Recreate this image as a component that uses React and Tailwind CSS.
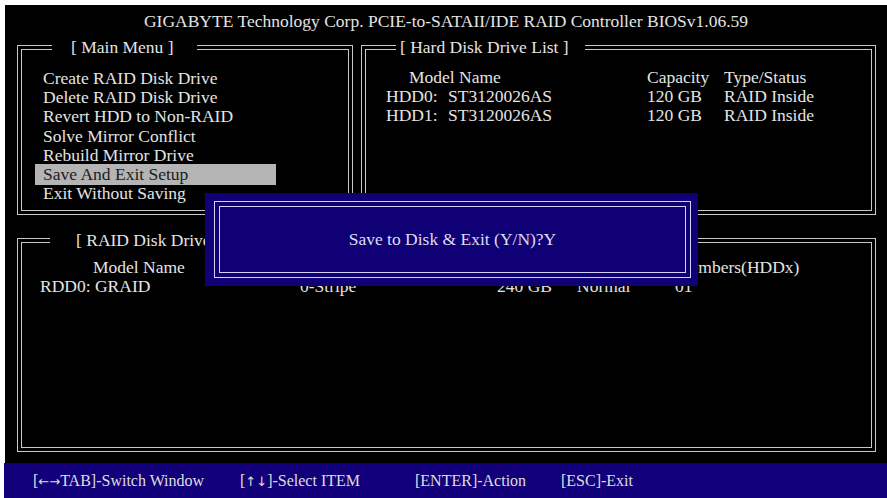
import React from 'react';

const menuItems = [
    'Create RAID Disk Drive',
    'Delete RAID Disk Drive',
    'Revert HDD to Non-RAID',
    'Solve Mirror Conflict',
    'Rebuild Mirror Drive',
    'Save And Exit Setup',
    'Exit Without Saving',
];

const hardDisks = [
    { port: 'HDD0:', model: 'ST3120026AS', size: '120 GB', status: 'RAID Inside' },
    { port: 'HDD1:', model: 'ST3120026AS', size: '120 GB', status: 'RAID Inside' },
];

// double-line box used by every BIOS window
function Frame({ className, title, children }) {
    return (
        <div className={`relative border border-[#c8c8c8] p-[3px] ${className}`}>
            <div className="h-full border border-[#c8c8c8]">{children}</div>
            {title}
        </div>
    );
}

export default function App() {
    const selected = 5;

    return (
        <div className="w-[887px] h-[498px] bg-white overflow-hidden font-['Liberation_Serif','Times_New_Roman',serif] text-[17.5px] text-[#e4e4e4]">
            <div className="relative ml-[5px] mt-[5px] h-[458px] bg-black flex flex-col pl-[12px]">
                <div className="pt-[7px] leading-[19px] text-center -ml-[12px] whitespace-nowrap">
                    GIGABYTE Technology Corp. PCIE-to-SATAII/IDE RAID Controller BIOSv1.06.59
                </div>

                <div className="mt-[14px] flex gap-[8px]">
                    <Frame
                        className="w-[336px] h-[170px]"
                        title={
                            <div className="absolute top-[-8px] left-[34px] w-[145px] pl-[19px] bg-black leading-[19px] whitespace-nowrap">
                                [ Main Menu ]
                            </div>
                        }
                    >
                        <div className="pt-[19px] ml-[13px] w-[241px] leading-[19.2px]">
                            {menuItems.map((item, i) => (
                                <div
                                    key={item}
                                    className={
                                        i === selected
                                            ? 'pl-[8px] py-px -my-px bg-[#b4b4b4] text-[#1c1c1c]'
                                            : 'pl-[8px]'
                                    }
                                >
                                    {item}
                                </div>
                            ))}
                        </div>
                    </Frame>

                    <Frame
                        className="w-[515px] h-[170px]"
                        title={
                            <div className="absolute top-[-8px] left-[34px] w-[189px] pl-[4px] bg-black leading-[19px] whitespace-nowrap">
                                [ Hard Disk Drive List ]
                            </div>
                        }
                    >
                        <div className="pt-[18px] pl-[20px] leading-[19px] grid grid-cols-[261px_77px_1fr] whitespace-nowrap">
                            <div className="pl-[23px]">Model Name</div>
                            <div>Capacity</div>
                            <div>Type/Status</div>
                            {hardDisks.map((d) => (
                                <React.Fragment key={d.port}>
                                    <div className="flex">
                                        <span className="w-[62px]">{d.port}</span>
                                        <span>{d.model}</span>
                                    </div>
                                    <div>{d.size}</div>
                                    <div>{d.status}</div>
                                </React.Fragment>
                            ))}
                        </div>
                    </Frame>
                </div>

                <Frame
                    className="mt-[23px] w-[859px] h-[214px]"
                    title={
                        <div className="absolute top-[-8px] left-[32px] w-[220px] pl-[26px] bg-black leading-[19px] whitespace-nowrap">
                            [ RAID Disk Drive List ]
                        </div>
                    }
                >
                    <div className="pt-[15px] pl-[18px] leading-[19px] grid grid-cols-[260px_197px_80px_98px_1fr] whitespace-nowrap">
                        <div className="pl-[53px]">Model Name</div>
                        <div>RAID Mode</div>
                        <div>Capacity</div>
                        <div>Status</div>
                        <div>Members(HDDx)</div>
                        <div>RDD0: GRAID</div>
                        <div>0-Stripe</div>
                        <div>240 GB</div>
                        <div>Normal</div>
                        <div>01</div>
                    </div>
                </Frame>

                {/* confirmation popup */}
                <div className="absolute left-[200px] top-[188px] w-[493px] h-[93px] bg-[#100076] pt-[8px] pb-[8px] pl-[9px] pr-[7px]">
                    <div className="h-full border border-[#d4d2f4] p-[4px]">
                        <div className="h-full border border-[#d4d2f4] flex items-center justify-center leading-[19px] text-[#dcdcf0]">
                            Save to Disk &amp; Exit (Y/N)?Y
                        </div>
                    </div>
                </div>
            </div>

            <div className="ml-[4px] h-[35px] bg-[#12007a] flex items-center pl-[29px] text-[16px] leading-[19px] text-[#dedede] whitespace-nowrap">
                <span className="w-[207px]">
                    [<span className="font-['DejaVu_Sans',sans-serif] text-[13px]">←→</span>TAB]-Switch Window
                </span>
                <span className="w-[175px]">
                    [<span className="font-['DejaVu_Sans',sans-serif] text-[13px]">↑↓</span>]-Select ITEM
                </span>
                <span className="w-[146px]">[ENTER]-Action</span>
                <span>[ESC]-Exit</span>
            </div>
        </div>
    );
}
